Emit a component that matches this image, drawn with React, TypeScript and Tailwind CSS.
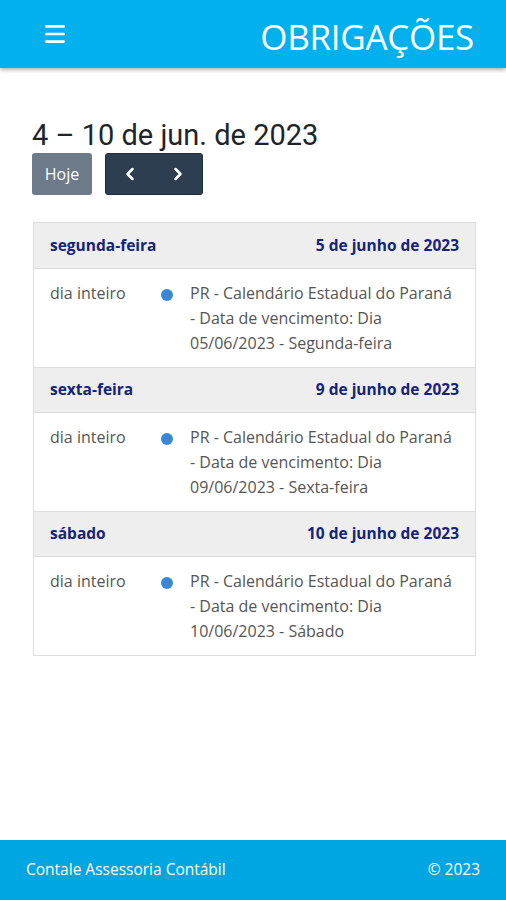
import { Menu, ChevronLeft, ChevronRight } from 'lucide-react'

const days = [
  { name: 'segunda-feira', date: '5 de junho de 2023', text: 'PR - Calendário Estadual do Paraná - Data de vencimento: Dia 05/06/2023 - Segunda-feira' },
  { name: 'sexta-feira', date: '9 de junho de 2023', text: 'PR - Calendário Estadual do Paraná - Data de vencimento: Dia 09/06/2023 - Sexta-feira' },
  { name: 'sábado', date: '10 de junho de 2023', text: 'PR - Calendário Estadual do Paraná - Data de vencimento: Dia 10/06/2023 - Sábado' },
]

export default function App() {
  return (
    <div className="w-[506px] h-[900px] flex flex-col bg-white font-['Open_Sans',sans-serif]">
      <header className="h-[68px] bg-[#03b0ee] flex items-center justify-between pl-[42px] pr-[32px] shadow-[0_2px_4px_rgba(0,0,0,0.3)] shrink-0">
        <Menu className="w-[26px] h-[26px] text-white" strokeWidth={2.5} />
        <h1 className="text-white text-[35px] leading-none tracking-[-0.3px] pt-1">OBRIGAÇÕES</h1>
      </header>

      <main className="flex-1 px-[32px] pt-[50px]">
        <h2 className="font-['Roboto',sans-serif] text-[29px] leading-[34px] text-[#212529]">4 – 10 de jun. de 2023</h2>
        <div className="flex gap-[13px] mt-[1px]">
          <button className="h-[42px] w-[60px] bg-[#6c7a89] text-white text-[16px] rounded-[3px]">Hoje</button>
          <div className="flex h-[42px] w-[98px] bg-[#2c3e50] rounded-[3px] items-center justify-between px-[14px] border border-[#1f2d3b]">
            <ChevronLeft className="w-[20px] h-[20px] text-white" strokeWidth={3} />
            <ChevronRight className="w-[20px] h-[20px] text-white" strokeWidth={3} />
          </div>
        </div>

        <div className="mt-[27px] ml-[1px] w-[443px] border border-[#ddd]">
          {days.map((d, i) => (
            <div key={i}>
              <div className={`h-[45px] bg-[#eeeeee] flex items-center justify-between px-[16px] font-bold text-[15.5px] text-[#14237d] ${i > 0 ? 'border-t border-[#ddd]' : ''}`}>
                <span>{d.name}</span>
                <span>{d.date}</span>
              </div>
              <div className="flex border-t border-[#ddd] pt-[12px] pb-[11px] text-[16px] leading-[25px] text-[#555]">
                <div className="w-[117px] pl-[16px] shrink-0">dia inteiro</div>
                <div className="w-[39px] shrink-0 flex pl-[10px] pt-[8px]">
                  <span className="block w-[12px] h-[12px] rounded-full bg-[#3788d8]" />
                </div>
                <div className="flex-1 pr-[16px]">{d.text}</div>
              </div>
            </div>
          ))}
        </div>
      </main>

      <footer className="h-[60px] bg-[#00a6e1] flex items-center justify-between px-[26px] text-white text-[15.5px] shrink-0">
        <span>Contale Assessoria Contábil</span>
        <span>© 2023</span>
      </footer>
    </div>
  )
}
